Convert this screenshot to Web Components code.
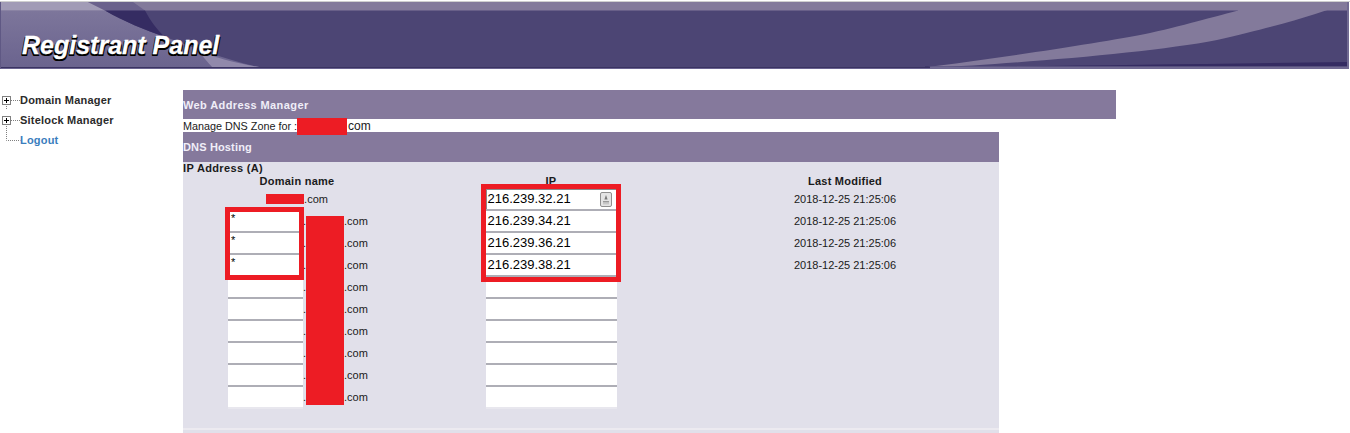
<!DOCTYPE html>
<html>
<head>
<meta charset="utf-8">
<title>Registrant Panel</title>
<style>
  html, body { margin: 0; background: #fff; font-family: "Liberation Sans", Arial, sans-serif; overflow: hidden; }
  body { height: 433px; }
  .page { display: flex; }
</style>
</head>
<body>
<panel-banner>Registrant Panel</panel-banner>
<div class="page">
  <side-tree>
    <tree-item kind="plus">Domain Manager</tree-item>
    <tree-item kind="plus">Sitelock Manager</tree-item>
    <tree-item kind="leaf" link>Logout</tree-item>
  </side-tree>
  <dns-content></dns-content>
</div>

<script>
class PanelBanner extends HTMLElement {
  constructor() {
    super();
    this.attachShadow({ mode: "open" });
    this.shadowRoot.innerHTML = `
      <style>
        :host { display: block; position: relative; height: 68px; margin-top: 1px; margin-bottom: 21px; overflow: hidden; }
        svg { position: absolute; left: 0; top: 0; }
        h1 { position: relative; margin: 0; padding: 28px 0 0 22px; font: italic bold 25px/32px "Liberation Sans", Arial, sans-serif; color: #fff; -webkit-text-stroke: .3px #fff; text-shadow: -1px 2px 0 #000, 1px 2px 0 #000, -1px 1px 0 #000; }
      </style>
      <svg width="1350" height="68" viewBox="0 1 1350 68">
        <defs>
          <linearGradient id="left" x1="0" y1="0" x2="0" y2="1">
            <stop offset="0" stop-color="#7d769b"/>
            <stop offset="1" stop-color="#6a638e"/>
          </linearGradient>
        </defs>
        <rect x="0" y="1" width="1350" height="1" fill="#cfcfcf"/>
        <rect x="0" y="2" width="1349" height="67" fill="#4c4574"/>
        <rect x="0" y="2" width="1349" height="8.5" fill="#837a9b"/>
        <path d="M0 10.5H105C125 22 145 30 165 37C190 46 225 60 263 68H0Z" fill="url(#left)"/>
        <path d="M0 2H88L105 10.5H0Z" fill="#a19bb6"/>
        <path d="M88 2H133L145 10.5H105Z" fill="#6a618c"/>
        <path d="M105 10.5H145C150 20 157 30 165 37C145 30 125 22 105 10.5Z" fill="#352c62"/>
        <path d="M197 50C215 58 240 64 265 68H213C207 62 203 56 197 50Z" fill="#9189ab"/>
        <path d="M920 68C1000 58 1100 43 1150 33C1190 24 1220 15 1238 10.5V2H1347V3C1320 13 1283 25 1217 40C1150 53 1020 63 930 68Z" fill="#837a9b"/>
        <path d="M925 67.5C1050 66 1200 64 1347 62V66.5H925Z" fill="#352c62"/>
        <rect x="0" y="67" width="1349" height="1" fill="#3a3362"/>
        <rect x="0" y="68" width="1349" height="1" fill="#6a6390"/>
        <rect x="930" y="66.5" width="419" height="2.5" fill="#716a92"/>
        <rect x="1347" y="2" width="2" height="67" fill="#716a92"/>
        <rect x="0" y="2" width="1" height="67" fill="#5f5884"/>
      </svg>
      <h1><slot></slot></h1>`;
  }
}

class SideTree extends HTMLElement {
  constructor() {
    super();
    this.attachShadow({ mode: "open" });
    this.shadowRoot.innerHTML = `
      <style>
        :host { display: flex; flex-direction: column; width: 183px; flex: none; box-sizing: border-box; }
      </style>
      <slot></slot>`;
  }
}

class TreeItem extends HTMLElement {
  constructor() {
    super();
    this.attachShadow({ mode: "open" });
    const isPlus = this.getAttribute("kind") === "plus";
    const isLink = this.hasAttribute("link");
    const icon = isPlus
      ? `<path d="M6.5 14v6" stroke="#808080" stroke-dasharray="1 1"/>
         <rect x="2.5" y="6.5" width="8" height="8" fill="#fff" stroke="#808080"/>
         <path d="M4 10.5h5M6.5 8v5" stroke="#000"/>
         <path d="M11 10.5h9" stroke="#808080" stroke-dasharray="1 1"/>`
      : `<path d="M6.5 0v10.5h14" fill="none" stroke="#808080" stroke-dasharray="1 1"/>`;
    this.shadowRoot.innerHTML = `
      <style>
        :host { display: flex; align-items: center; height: 20px; font: bold 11px/20px "Liberation Sans", Arial, sans-serif; letter-spacing: .2px; color: ${isLink ? "#3a7dbd" : "#2b2b2b"}; }
        svg { flex: none; overflow: visible; }
      </style>
      <svg width="20" height="20" viewBox="0 0 20 20">${icon}</svg>
      <slot></slot>`;
  }
}

class SectionBar extends HTMLElement {
  constructor() {
    super();
    this.attachShadow({ mode: "open" });
    this.shadowRoot.innerHTML = `
      <style>
        :host { display: flex; align-items: center; height: 29px; background: #85799c; color: #f0eef8; font: bold 11px "Liberation Sans", Arial, sans-serif; letter-spacing: .4px; }
        :host([short]) { height: 30px; width: 816px; letter-spacing: .15px; }
      </style>
      <slot></slot>`;
  }
}

class TextField extends HTMLElement {
  constructor() {
    super();
    this.attachShadow({ mode: "open" });
    this.shadowRoot.innerHTML = `
      <style>
        :host { display: flex; box-sizing: border-box; height: 22px; background: #fff; border-bottom: 2px solid #aeaeb6; color: #000; }
        :host([wide]) { width: 131px; padding: 0 2px; align-items: flex-start; font: 13px/20px "Liberation Sans", Arial, sans-serif; justify-content: space-between; }
        :host([narrow]) { width: 75px; padding: 1px 0 0 3px; font: 11px "Liberation Sans", Arial, sans-serif; }
        :host([last]) { border-bottom-color: #e8e7ee; }
        :host([autofill]) { box-shadow: inset 1px 1px 0 #8a8a8a; }
        svg { flex: none; margin: 3px 3px 0 0; }
      </style>
      <slot></slot>
      ${this.hasAttribute("autofill") ? `<svg width="12" height="15" viewBox="0 0 12 15">
        <rect x=".5" y=".5" width="11" height="14" rx="1.5" fill="#e4e4e4" stroke="#8f8f8f"/>
        <path d="M6 3 7.6 7.5H4.4Z" fill="#777"/><rect x="3" y="9" width="6" height="1.5" fill="#999"/><rect x="3" y="11.3" width="6" height="1" fill="#bbb"/>
      </svg>` : ""}`;
  }
}

class DnsContent extends HTMLElement {
  constructor() {
    super();
    this.attachShadow({ mode: "open" });
    const ips = ["216.239.32.21", "216.239.34.21", "216.239.36.21", "216.239.38.21", "", "", "", "", "", ""];
    const rows = ips.map((ip, i) => {
      const domain = i === 0
        ? `<div class="apex"><span class="mask"></span>.com</div>`
        : `<div class="sub"><text-field narrow ${i === 9 ? "last" : ""}>${i < 4 ? "*" : ""}</text-field><span class="dot">.</span><span class="gap"></span>.com</div>`;
      const ipField = `<div class="ip"><text-field wide ${i === 0 ? "autofill" : ""} ${i === 9 ? "last" : ""}>${ip}</text-field></div>`;
      const modified = `<div class="mod">${ip ? "2018-12-25 21:25:06" : ""}</div>`;
      return domain + ipField + modified;
    }).join("");
    this.shadowRoot.innerHTML = `
      <style>
        :host { display: block; width: 933px; font: 11px "Liberation Sans", Arial, sans-serif; color: #1a1a1a; }
        .manage { display: flex; height: 13px; line-height: 14px; font-size: 10.8px; }
        .manage b { font-weight: normal; font-size: 12px; margin-left: 1px; }
        .manage .mask { width: 50px; height: 17px; margin-top: -1px; flex: none; }
        .mask { display: inline-block; background: #ed1c24; }
        .panel { width: 816px; height: 271px; box-sizing: border-box; background: #e1e0ea; position: relative; }
        .title { font-weight: bold; line-height: 12px; letter-spacing: .35px; }
        .grid { display: grid; grid-template-columns: 228px 280px 308px; grid-template-rows: 15px; grid-auto-rows: 22px; }
        .head { font-weight: bold; text-align: center; line-height: 14px; letter-spacing: .25px; }
        .apex { display: flex; align-items: center; justify-content: center; padding-bottom: 2px; }
        .apex .mask { width: 38px; height: 10px; }
        .sub { display: flex; align-items: flex-start; padding-left: 45px; line-height: 20px; }
        .dot { width: 3px; }
        .gap { width: 38px; flex: none; }
        .ip { display: flex; justify-content: center; }
        .mod { display: flex; align-items: center; justify-content: center; padding-bottom: 2px; }
        .block { position: absolute; background: #ed1c24; left: 123px; top: 54px; width: 38px; height: 189px; }
        .frame { position: absolute; border: 5px solid #ed1c24; box-sizing: border-box; }
        .frame.a { left: 42px; top: 45px; width: 79px; height: 73px; }
        .frame.b { left: 298px; top: 22px; width: 140px; height: 98px; }
        .foot { position: absolute; left: 0; right: 0; top: 266px; height: 2px; background: #eceaf0; }
      </style>
      <section-bar>Web Address Manager</section-bar>
      <div class="manage">Manage DNS Zone for :<span class="mask"></span><b>com</b></div>
      <section-bar short>DNS Hosting</section-bar>
      <div class="panel">
        <div class="title">IP Address (A)</div>
        <div class="grid">
          <div class="head">Domain name</div><div class="head">IP</div><div class="head">Last Modified</div>
          ${rows}
        </div>
        <div class="block"></div>
        <div class="frame a"></div>
        <div class="frame b"></div>
        <div class="foot"></div>
      </div>`;
  }
}

customElements.define("panel-banner", PanelBanner);
customElements.define("side-tree", SideTree);
customElements.define("tree-item", TreeItem);
customElements.define("section-bar", SectionBar);
customElements.define("text-field", TextField);
customElements.define("dns-content", DnsContent);
</script>
</body>
</html>
